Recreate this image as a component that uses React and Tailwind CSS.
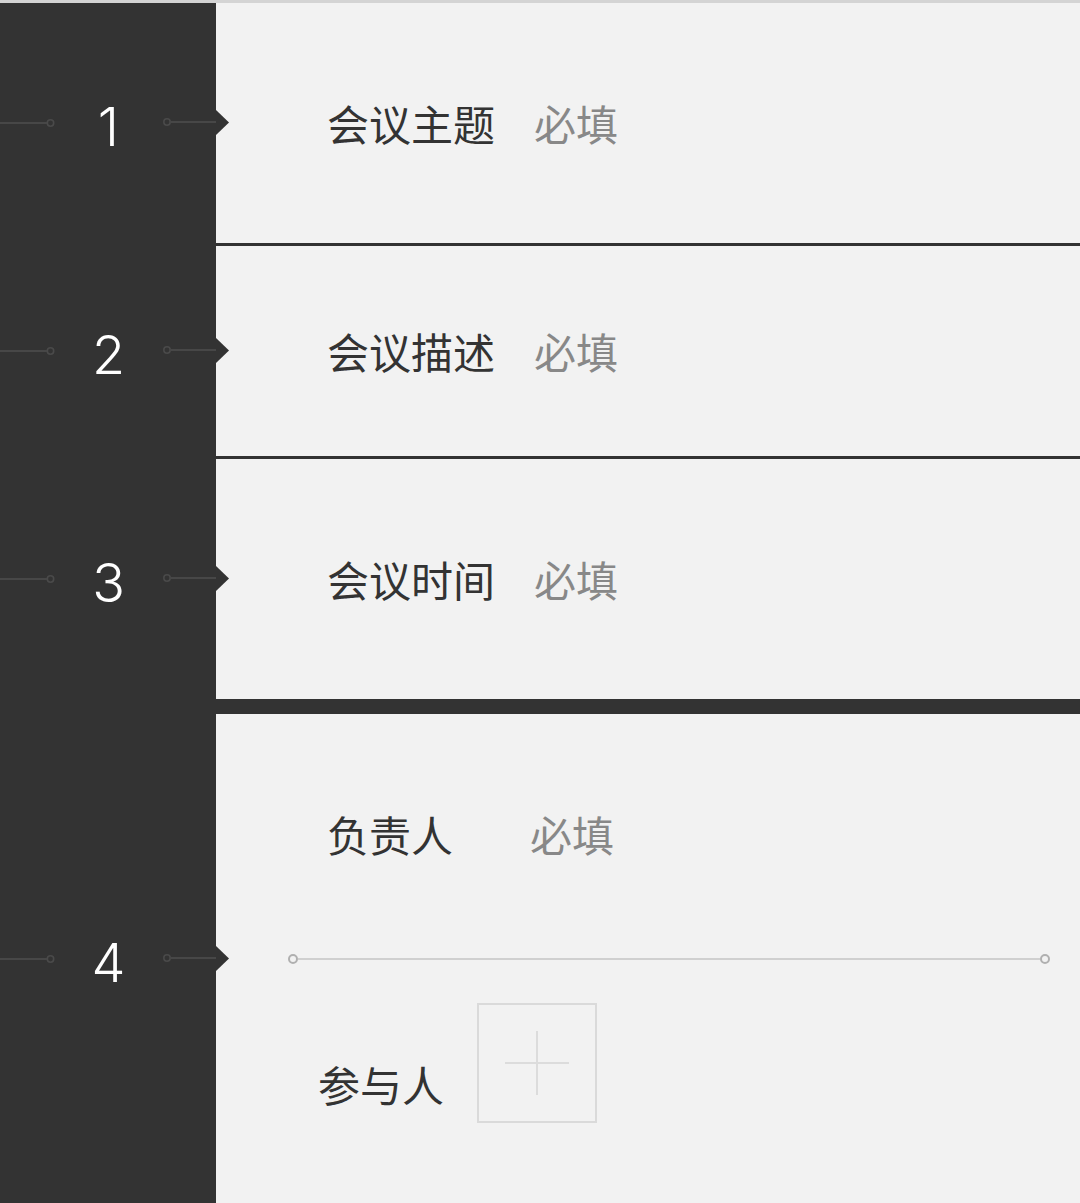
const CJK = { fontFamily: '"Noto Sans CJK SC", "Noto Sans", sans-serif' }

function Marker({ n }) {
  return (
    <div className="w-[216px] shrink-0 bg-[#333333] flex items-center">
      <svg width="56" height="12" className="shrink-0">
        <line x1="0" y1="6" x2="47" y2="6" stroke="#474747" strokeWidth="2" />
        <circle cx="50.5" cy="6" r="3.2" fill="none" stroke="#4a4a4a" strokeWidth="1.6" />
      </svg>
      <div className="flex-1 text-center text-white text-[54px] font-light leading-none pt-[8px] pl-[5px]"
        style={{ fontFamily: 'Inter, "Open Sans", "Liberation Sans", sans-serif' }}>
        {n}
      </div>
      <svg width="60" height="12" className="shrink-0 -translate-y-[1px]">
        <circle cx="11" cy="6" r="3.2" fill="none" stroke="#4a4a4a" strokeWidth="1.6" />
        <line x1="14.5" y1="6" x2="60" y2="6" stroke="#474747" strokeWidth="2" />
      </svg>
    </div>
  )
}

function Notch() {
  return (
    <svg width="14" height="26" className="absolute left-0 top-1/2 -translate-y-1/2">
      <polygon points="0,0 13,12.5 0,25" fill="#333333" />
    </svg>
  )
}

function FieldRow({ n, label, height }) {
  return (
    <div className={`flex ${height}`}>
      <Marker n={n} />
      <div className="relative flex-1 bg-[#f2f2f2] flex items-center pl-[111px]" style={CJK}>
        <Notch />
        <span className="text-[42px] text-[#333333] leading-none">{label}</span>
        <span className="ml-[39px] text-[42px] text-[#888888] leading-none">必填</span>
      </div>
    </div>
  )
}

export default function App() {
  return (
    <div className="w-[1080px] h-[1203px] overflow-hidden bg-[#f2f2f2] flex flex-col">
      <div className="h-[3px] bg-[#d4d4d4]" />
      <FieldRow n="1" label="会议主题" height="h-[240px]" />
      <div className="h-[3px] bg-[#333333]" />
      <FieldRow n="2" label="会议描述" height="h-[210px]" />
      <div className="h-[3px] bg-[#333333]" />
      <FieldRow n="3" label="会议时间" height="h-[240px]" />
      <div className="h-[15px] bg-[#333333]" />

      <div className="flex h-[489px]">
        <Marker n="4" />
        <div className="relative flex-1 bg-[#f2f2f2] flex flex-col" style={CJK}>
          <Notch />
          <div className="h-[240px] flex items-center pl-[111px]">
            <span className="text-[42px] text-[#333333] leading-none">负责人</span>
            <span className="ml-[77px] text-[42px] text-[#888888] leading-none">必填</span>
          </div>
          <div className="h-[10px] flex items-center ml-[72px] mr-[30px]">
            <span className="w-[10px] h-[10px] rounded-full border-2 border-[#b0b0b0] shrink-0" />
            <span className="flex-1 h-[2px] bg-[#d0d0d0]" />
            <span className="w-[10px] h-[10px] rounded-full border-2 border-[#b0b0b0] shrink-0" />
          </div>
          <div className="flex items-end mt-[39px] pl-[102px]">
            <span className="text-[42px] text-[#333333] leading-none mb-[18px]">参与人</span>
            <div className="ml-[33px] w-[120px] h-[120px] border-2 border-[#dadada] flex items-center justify-center">
              <svg width="64" height="64">
                <line x1="0" y1="32" x2="64" y2="32" stroke="#dcdcdc" strokeWidth="2" />
                <line x1="32" y1="0" x2="32" y2="64" stroke="#dcdcdc" strokeWidth="2" />
              </svg>
            </div>
          </div>
        </div>
      </div>
    </div>
  )
}
